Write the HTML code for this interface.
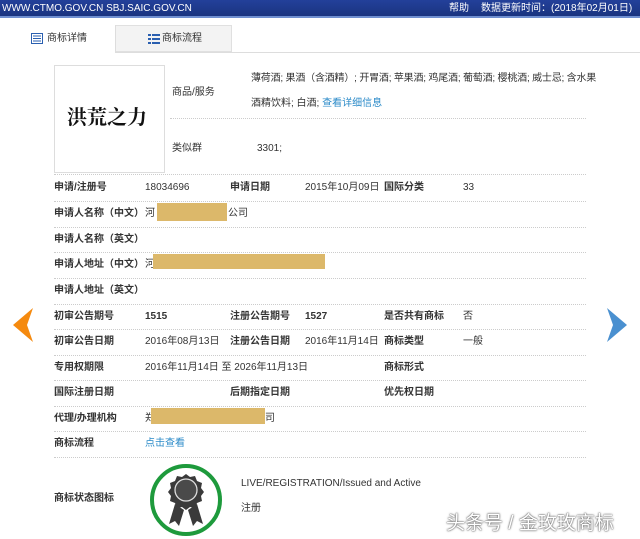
<!DOCTYPE html>
<html><head><meta charset="utf-8"><style>
*{margin:0;padding:0;box-sizing:border-box}
body{width:640px;height:539px;overflow:hidden;background:#fff;font-family:"Liberation Sans","Noto Sans CJK SC",sans-serif;font-size:10px;color:#333;position:relative}
.hdr{position:absolute;left:0;top:0;width:640px;height:18px;background:linear-gradient(#23409a,#1a3480);border-bottom:2px solid #6f8fd0;color:#fff;font-size:10px;line-height:17px}
.t{position:absolute;white-space:nowrap;line-height:14px;height:14px}
.t span{vertical-align:top}
.b{font-weight:bold}
.dl{position:absolute;left:54px;width:532px;border-top:1px dotted #ccc;height:0}
.lnk{color:#2a8ac8}
.red{position:absolute;background:#dcb86a}
</style></head><body>
<div class="hdr"><span style="position:absolute;left:2px;top:0;white-space:nowrap">WWW.CTMO.GOV.CN SBJ.SAIC.GOV.CN</span><span style="position:absolute;left:449px;top:0">帮助</span><span style="position:absolute;left:481px;top:0;white-space:nowrap">数据更新时间：(2018年02月01日)</span></div>
<div style="position:absolute;left:0;top:52px;width:640px;border-top:1px solid #ddd"></div>
<div style="position:absolute;left:0;top:25px;width:116px;height:28px;background:#fff;border-right:1px solid #ddd"></div>
<div style="position:absolute;left:116px;top:25px;width:116px;height:27px;background:#f3f3f3;border:1px solid #e0e0e0;border-left:none"></div>
<svg style="position:absolute;left:31px;top:33px" width="12" height="11"><rect x="0.5" y="0.5" width="11" height="10" fill="none" stroke="#2a5fb0"/><path d="M2 3h8M2 5.5h8M2 8h8" stroke="#2a5fb0"/></svg>
<span class="t" style="left:47px;top:32px">商标详情</span>
<svg style="position:absolute;left:148px;top:33px" width="12" height="11"><path d="M0 1h3v2H0zM4 1h8v2H4zM0 5h3v2H0zM4 5h8v2H4zM0 9h3v2H0zM4 9h8v2H4z" fill="#2a5fb0"/></svg>
<span class="t" style="left:162px;top:32px">商标流程</span>

<div style="position:absolute;left:54px;top:65px;width:111px;height:108px;border:1px solid #ddd"></div>
<span class="t" style="left:67px;top:104px;font-size:20px;line-height:24px;height:24px;font-weight:bold;font-family:'Noto Serif CJK SC',serif;color:#111">洪荒之力</span>
<span class="t" style="left:172px;top:86px">商品/服务</span>
<span class="t" style="left:251px;top:72px;letter-spacing:-0.2px">薄荷酒; 果酒（含酒精）; 开胃酒; 苹果酒; 鸡尾酒; 葡萄酒; 樱桃酒; 威士忌; 含水果</span>
<span class="t" style="left:251px;top:97px">酒精饮料; 白酒; <span class="lnk">查看详细信息</span></span>
<div class="dl" style="left:170px;width:416px;top:118px"></div>
<span class="t" style="left:172px;top:142px">类似群</span>
<span class="t" style="left:257px;top:142px">3301;</span>
<div class="dl" style="top:174px"></div>

<span class="t b" style="left:54px;top:181px">申请/注册号</span><span class="t" style="left:145px;top:181px">18034696</span><span class="t b" style="left:230px;top:181px">申请日期</span><span class="t" style="left:305px;top:181px">2015年10月09日</span><span class="t b" style="left:384px;top:181px">国际分类</span><span class="t" style="left:463px;top:181px">33</span>
<div class="dl" style="top:201px"></div>
<span class="t b" style="left:54px;top:207px">申请人名称（中文）</span><span class="t" style="left:145px;top:207px">河</span><div class="red" style="left:157px;top:203px;width:70px;height:18px"></div><span class="t" style="left:228px;top:207px">公司</span>
<div class="dl" style="top:227px"></div>
<span class="t b" style="left:54px;top:233px">申请人名称（英文）</span>
<div class="dl" style="top:252px"></div>
<span class="t b" style="left:54px;top:258px">申请人地址（中文）</span><span class="t" style="left:145px;top:258px">河</span><div class="red" style="left:153px;top:254px;width:172px;height:15px"></div>
<div class="dl" style="top:278px"></div>
<span class="t b" style="left:54px;top:284px">申请人地址（英文）</span>
<div class="dl" style="top:304px"></div>
<span class="t b" style="left:54px;top:310px">初审公告期号</span><span class="t b" style="left:145px;top:310px">1515</span><span class="t b" style="left:230px;top:310px">注册公告期号</span><span class="t b" style="left:305px;top:310px">1527</span><span class="t b" style="left:384px;top:310px">是否共有商标</span><span class="t" style="left:463px;top:310px">否</span>
<div class="dl" style="top:329px"></div>
<span class="t b" style="left:54px;top:335px">初审公告日期</span><span class="t" style="left:145px;top:335px">2016年08月13日</span><span class="t b" style="left:230px;top:335px">注册公告日期</span><span class="t" style="left:305px;top:335px">2016年11月14日</span><span class="t b" style="left:384px;top:335px">商标类型</span><span class="t" style="left:463px;top:335px">一般</span>
<div class="dl" style="top:355px"></div>
<span class="t b" style="left:54px;top:361px">专用权期限</span><span class="t" style="left:145px;top:361px">2016年11月14日 至 2026年11月13日</span><span class="t b" style="left:384px;top:361px">商标形式</span>
<div class="dl" style="top:380px"></div>
<span class="t b" style="left:54px;top:386px">国际注册日期</span><span class="t b" style="left:230px;top:386px">后期指定日期</span><span class="t b" style="left:384px;top:386px">优先权日期</span>
<div class="dl" style="top:406px"></div>
<span class="t b" style="left:54px;top:412px">代理/办理机构</span><span class="t" style="left:145px;top:412px">郑</span><div class="red" style="left:151px;top:408px;width:114px;height:16px"></div><span class="t" style="left:265px;top:412px">司</span>
<div class="dl" style="top:431px"></div>
<span class="t b" style="left:54px;top:437px">商标流程</span><span class="t lnk" style="left:145px;top:437px">点击查看</span>
<div class="dl" style="top:457px"></div>
<span class="t b" style="left:54px;top:492px">商标状态图标</span>
<svg style="position:absolute;left:147px;top:461px" width="78" height="78"><circle cx="39" cy="39" r="34" fill="#fff" stroke="#1e9a3c" stroke-width="4"/>
<path d="M28 43l-6 20 6-3 4 5 5-16zM50 43l6 20-6-3-4 5-5-16z" fill="#3a3a3a"/>
<path d="M39 13l4 3 5-1 2 5 5 2-1 5 3 4-3 4 1 5-5 2-2 5-5-1-4 3-4-3-5 1-2-5-5-2 1-5-3-4 3-4-1-5 5-2 2-5 5 1z" fill="#3a3a3a"/>
<circle cx="39" cy="29" r="11" fill="#4a4a4a" stroke="#ddd" stroke-width="1.3"/></svg>
<span class="t" style="left:241px;top:477px">LIVE/REGISTRATION/Issued and Active</span>
<span class="t" style="left:241px;top:502px">注册</span>
<span style="position:absolute;white-space:nowrap;left:446px;top:508px;font-size:19px;color:#fff;text-shadow:0 0 2px #555,0 0 1px #333">头条号 / 金玫玫商标</span>
<svg style="position:absolute;left:12px;top:308px" width="22" height="36"><path d="M21 0L1 17l20 17-6-17z" fill="#f58a0f"/></svg>
<svg style="position:absolute;left:606px;top:308px" width="22" height="36"><path d="M1 0l20 17-20 17 6-17z" fill="#4a90d0"/></svg>
</body></html>
